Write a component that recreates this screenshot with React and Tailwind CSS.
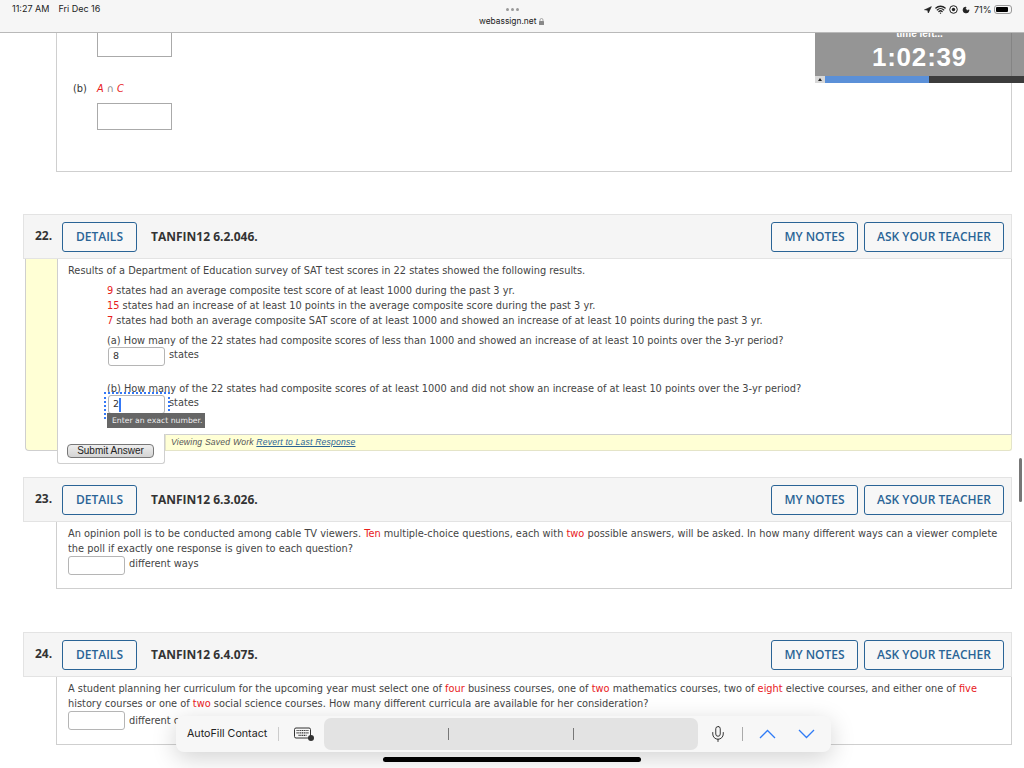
import React from 'react';
import { Navigation, Wifi, Moon, Mic } from 'lucide-react';

const Red = ({ children }) => <span className="text-[#e8201c]">{children}</span>;

const OutlineButton = ({ children, className }) => (
    <div className={`h-[30px] flex items-center justify-center border-[1.5px] border-[#2a6496] rounded-[3px] bg-[#f7f7f7] text-[#2a6496] text-[12px] font-semibold ${className}`}>
        {children}
    </div>
);

const QuestionHeader = ({ num, code }) => (
    <div className="ml-[23px] w-[989px] h-[45px] bg-[#f5f5f5] border border-[#e3e3e3] flex items-center pl-[11px] pr-[7px] font-['Open_Sans',sans-serif]">
        <div className="w-[27px] text-[12px] font-bold text-[#333] -mt-[1px]">{num}.</div>
        <OutlineButton className="w-[75px]">DETAILS</OutlineButton>
        <div className="ml-[14px] text-[12px] font-bold text-[#333]">{code}</div>
        <OutlineButton className="w-[87px] ml-auto">MY NOTES</OutlineButton>
        <OutlineButton className="w-[140px] ml-[6px]">ASK YOUR TEACHER</OutlineButton>
    </div>
);

const AnswerInput = ({ value, caret }) => (
    <div className="w-[57px] h-[19px] bg-white border border-[#b5b5b5] rounded-[3px] flex items-center pl-[4px] text-[9.5px] text-[#333]">
        {value}
        {caret && <span className="w-[1.5px] h-[14px] bg-[#3478f6]" />}
    </div>
);

const Line = ({ children, className = '' }) => (
    <div className={`h-[15px] leading-[15px] whitespace-nowrap ${className}`}>{children}</div>
);

const App = () => {
    return (
        <div className="relative w-[1024px] h-[768px] overflow-hidden bg-white font-['DejaVu_Sans',sans-serif] text-[9.8px] text-[#444]">
            {/* safari bar */}
            <div className="relative h-[33px] bg-[#f6f6f6] border-b border-[#b9b9b9] font-['Inter',sans-serif] text-[#222]">
                <div className="absolute left-[12px] top-[3px] text-[9px] leading-[11px] flex">
                    <span>11:27 AM</span>
                    <span className="ml-[9px]">Fri Dec 16</span>
                </div>
                <div className="absolute left-[506px] top-[8px] flex gap-[2px]">
                    <span className="w-[3px] h-[3px] rounded-full bg-[#999]" />
                    <span className="w-[3px] h-[3px] rounded-full bg-[#999]" />
                    <span className="w-[3px] h-[3px] rounded-full bg-[#999]" />
                </div>
                <div className="absolute left-[479px] top-[16px] text-[8.4px] leading-[11px]">webassign.net</div>
                <svg className="absolute left-[539px] top-[18px]" width="5" height="7" viewBox="0 0 5 7"><rect x="0" y="3" width="5" height="4" rx="0.5" fill="#888" /><path d="M1 3V2a1.5 1.5 0 0 1 3 0v1" fill="none" stroke="#888" strokeWidth="0.7" /></svg>
                <div className="absolute left-[924px] top-[4px] flex items-center text-[9px] leading-[10px]">
                    <Navigation size={8} fill="#222" />
                    <Wifi size={11} strokeWidth={3} className="ml-[3px]" />
                    <svg className="ml-[3px]" width="9" height="9" viewBox="0 0 9 9"><circle cx="4.5" cy="4.5" r="3.8" fill="none" stroke="#222" /><circle cx="4.5" cy="4.5" r="1.7" fill="#222" /></svg>
                    <Moon size={8} fill="#222" className="ml-[4px]" />
                    <span className="ml-[4px]">71%</span>
                    <div className="w-[18px] h-[9px] border border-[#999] rounded-[3px] p-[1px] ml-[2px]"><div className="w-[12px] h-full bg-black rounded-[1px]" /></div>
                </div>
            </div>

            {/* timer */}
            <div className="absolute left-[815px] top-[33px] w-[209px] h-[50px] bg-[#959595] text-white text-center font-['Liberation_Sans',sans-serif] overflow-hidden">
                <div className="absolute left-[196px] top-0 w-px h-[43px] bg-[#848484]" />
                <div className="h-[6px] -mt-[5px] text-[10px] leading-[12px] font-bold">time left...</div>
                <div className="mt-[10px] h-[27px] text-[26px] leading-[27px] font-bold tracking-[0.8px]">1:02:39</div>
                <div className="mt-[5px] h-[7px] flex bg-[#3c3c3c]">
                    <div className="w-[10px] bg-[#d8d8d8] flex items-center justify-center"><span className="w-0 h-0 border-x-[2.5px] border-x-transparent border-b-[3px] border-b-[#222]" /></div>
                    <div className="w-[104px] bg-[#5b90d8]" />
                </div>
            </div>

            {/* end of question 21 */}
            <div className="ml-[56px] w-[956px] h-[139px] border-x border-b border-[#cfcfcf]">
                <div className="ml-[40px] w-[75px] h-[24px] border border-[#aaa] border-t-0" />
                <div className="ml-[16px] mt-[26px] h-[12px] flex items-center whitespace-pre text-[#333]">(b)<span className="ml-[10px] text-[#e8201c] italic">A</span><span className="text-[#888]"> ∩ </span><span className="text-[#e8201c] italic">C</span></div>
                <div className="ml-[40px] mt-[8px] w-[75px] h-[27px] border border-[#aaa]" />
            </div>

            <div className="mt-[42px]"><QuestionHeader num="22" code="TANFIN12 6.2.046." /></div>
            <div className="ml-[25px] w-[987px] h-[205px] flex items-start">
                <div className="w-[32px] h-[192px] bg-[#ffffd5] border-l border-b border-[#cfcfcf] rounded-bl-[4px]" />
                <div className="flex-1 flex flex-col">
                    <div className="relative h-[175px] border-x border-[#cfcfcf] pl-[10px]">
                        <Line className="mt-[4px]">Results of a Department of Education survey of SAT test scores in 22 states showed the following results.</Line>
                        <div className="ml-[39px] mt-[5px]">
                            <Line><Red>9</Red> states had an average composite test score of at least 1000 during the past 3 yr.</Line>
                            <Line><Red>15</Red> states had an increase of at least 10 points in the average composite score during the past 3 yr.</Line>
                            <Line><Red>7</Red> states had both an average composite SAT score of at least 1000 and showed an increase of at least 10 points during the past 3 yr.</Line>
                            <Line className="mt-[5px]">(a) How many of the 22 states had composite scores of less than 1000 and showed an increase of at least 10 points over the 3-yr period?</Line>
                            <div className="flex items-center h-[19px] mt-[-1px] ml-[1px]">
                                <AnswerInput value="8" />
                                <span className="ml-[4px] -mt-[2px]">states</span>
                            </div>
                            <Line className="mt-[15px]">(b) How many of the 22 states had composite scores of at least 1000 and did not show an increase of at least 10 points over the 3-yr period?</Line>
                            <div className="flex items-center h-[19px] mt-[-1px] ml-[1px]">
                                <AnswerInput value="2" caret />
                                <span className="ml-[4px] -mt-[2px]">states</span>
                            </div>
                        </div>
                        <div className="absolute left-[46px] top-[133px] w-[66px] h-[27px] border-2 border-dotted border-[#3478f6]" />
                        <div className="absolute left-[49px] top-[154px] w-[98px] h-[15px] bg-[#666] text-[#eee] text-[7.7px] leading-[15px] pl-[5px] whitespace-nowrap">Enter an exact number.</div>
                    </div>
                    <div className="flex items-start">
                        <div className="w-[108px] h-[30px] bg-white border-x border-b border-[#cfcfcf] rounded-b-[3px] pt-[10px] pl-[9px]">
                            <div className="w-[87px] h-[14px] rounded-[4px] border border-[#777] bg-gradient-to-b from-[#eee] to-[#d4d4d4] text-[#222] text-center text-[10px] leading-[12px] font-['Liberation_Sans',sans-serif]">Submit Answer</div>
                        </div>
                        <div className="flex-1 h-[17px] bg-[#ffffd5] border border-t-[#cfcfcf] border-[#e4e4c8] rounded-br-[3px] pl-[5px] leading-[15px] text-[8.6px] italic text-[#555] font-['Liberation_Sans',sans-serif] tracking-[0.2px]">
                            Viewing Saved Work <span className="text-[#2a6496] underline">Revert to Last Response</span>
                        </div>
                    </div>
                </div>
            </div>

            <div className="mt-[13px]"><QuestionHeader num="23" code="TANFIN12 6.3.026." /></div>
            <div className="ml-[56px] w-[956px] h-[67px] border-x border-b border-[#cfcfcf] pl-[11px] pt-[4px]">
                <Line>An opinion poll is to be conducted among cable TV viewers. <Red>Ten</Red> multiple-choice questions, each with <Red>two</Red> possible answers, will be asked. In how many different ways can a viewer complete</Line>
                <Line>the poll if exactly one response is given to each question?</Line>
                <div className="flex items-center h-[19px]">
                    <AnswerInput />
                    <span className="ml-[4px] -mt-[2px]">different ways</span>
                </div>
            </div>

            <div className="mt-[43px]"><QuestionHeader num="24" code="TANFIN12 6.4.075." /></div>
            <div className="ml-[56px] w-[956px] h-[68px] border-x border-b border-[#cfcfcf] pl-[11px] pt-[4px]">
                <Line>A student planning her curriculum for the upcoming year must select one of <Red>four</Red> business courses, one of <Red>two</Red> mathematics courses, two of <Red>eight</Red> elective courses, and either one of <Red>five</Red></Line>
                <Line>history courses or one of <Red>two</Red> social science courses. How many different curricula are available for her consideration?</Line>
                <div className="flex items-center h-[19px]">
                    <AnswerInput />
                    <span className="ml-[4px] mt-[1px]">different curricula</span>
                </div>
            </div>

            {/* scroll indicator */}
            <div className="absolute left-[1019px] top-[458px] w-[3px] h-[44px] rounded-full bg-[#777]" />

            {/* ipad autofill bar */}
            <div className="absolute left-[176px] top-[716px] w-[655px] h-[36px] bg-[#f7f7f7] rounded-[8px] shadow-[0_6px_24px_rgba(0,0,0,0.18)] flex items-center font-['Inter',sans-serif] text-[#222]">
                <span className="ml-[11px] text-[10.7px]">AutoFill Contact</span>
                <span className="ml-[11px] w-px h-[14px] bg-[#ccc]" />
                <svg className="ml-[15px]" width="21" height="14" viewBox="0 0 21 14">
                    <rect x="0.5" y="1" width="16" height="10" rx="1.5" fill="none" stroke="#333" />
                    <path d="M2.5 3.5h12M2.5 5.8h12M4.5 8.3h8" stroke="#333" strokeWidth="1.2" strokeDasharray="1.2 .6" />
                    <circle cx="17" cy="11" r="3" fill="#333" />
                </svg>
                <div className="relative ml-[9px] w-[374px] h-[32px] rounded-[7px] bg-[#e3e3e3]">
                    <span className="absolute left-[124px] top-[10px] w-px h-[12px] bg-[#777]" />
                    <span className="absolute left-[249px] top-[10px] w-px h-[12px] bg-[#777]" />
                </div>
                <Mic size={18} strokeWidth={1.2} className="ml-[11px]" />
                <span className="ml-[15px] w-px h-[14px] bg-[#aaa]" />
                <svg className="ml-[16px]" width="17" height="10" viewBox="0 0 17 10"><path d="M1 9 8.5 1.5 16 9" fill="none" stroke="#2f7bf6" strokeWidth="1.3" /></svg>
                <svg className="ml-[22px]" width="17" height="10" viewBox="0 0 17 10"><path d="M1 1l7.5 7.5L16 1" fill="none" stroke="#2f7bf6" strokeWidth="1.3" /></svg>
            </div>

            {/* home indicator */}
            <div className="absolute left-[383px] top-[757px] w-[258px] h-[5px] rounded-full bg-black" />
        </div>
    );
};

export default App;
